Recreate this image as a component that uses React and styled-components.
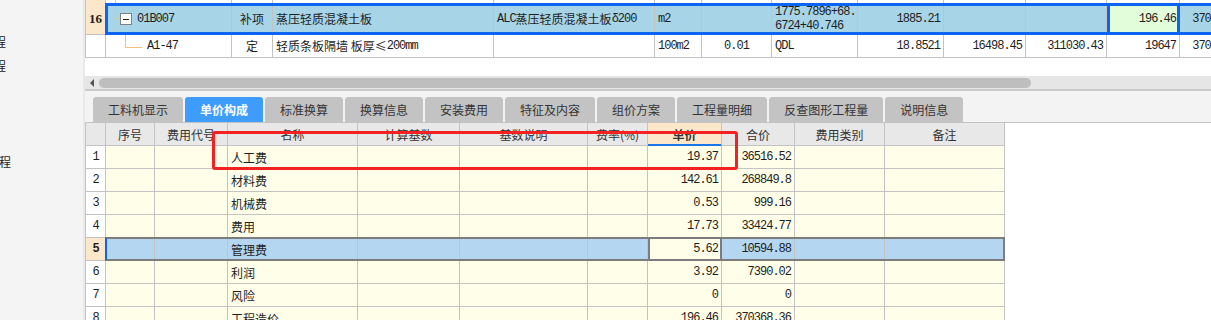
import React from "react";
import styled, { createGlobalStyle } from "styled-components";

const CJK = `"Noto Sans CJK SC", "Noto Sans", sans-serif`
const MONO = `"Liberation Mono", "Noto Sans CJK SC", monospace`

const GlobalStyle = createGlobalStyle`
  html, body {
    margin: 0;
    padding: 0;
    background: #fff;
  }
  body {
    width: 1211px;
    height: 320px;
    overflow: hidden;
    font-family: ${CJK};
    font-size: 12px;
    color: #1e1e1e;
  }
`

const TOP_COLS = [21, 126, 41, 221, 161, 47, 70, 86, 86, 82, 81, 73, 72]
const BOTTOM_COLS = [21, 49, 73, 130, 102, 128, 60, 74, 73, 90, 120]
const LINE = '#c3c3c3'
const PEACH = '#fde7ca'
const BLUE = '#0b64f2'

const Page = styled.div`
  position: relative;
  display: flex;
  width: 1211px;
  height: 320px;
  overflow: hidden;
  background: #fff;
`

const Sidebar = styled.div`
  flex: 0 0 83px;
  background: #f4f4f4;
  border-right: 2px solid #e9e9e9;
  padding-top: 30px;
  overflow: hidden;
  font-family: ${CJK};
  font-size: 12px;
  color: #222;
`

const TreeItem = styled.div`
  height: 24px;
  line-height: 24px;
  white-space: nowrap;
  margin-left: ${({ $shift }) => $shift}px;
`

const Main = styled.div`
  flex: 1;
  min-width: 0;
  display: flex;
  flex-direction: column;
  overflow: hidden;
`

const TopGrid = styled.div`
  flex: 0 0 76px;
  background: #fff;
  overflow: hidden;
`

const TopRow = styled.div`
  position: relative;
  display: flex;
  width: max-content;
  height: ${({ $h }) => $h}px;
  background: ${({ $bg }) => $bg || 'transparent'};
`

const justify = a => a === 'right' ? 'flex-end' : a === 'center' ? 'center' : 'flex-start'

const TopCell = styled.div`
  position: relative;
  flex: 0 0 ${({ $w }) => $w}px;
  box-sizing: border-box;
  display: flex;
  align-items: center;
  justify-content: ${({ $align }) => justify($align)};
  padding: 0 3px 0 ${({ $indent }) => $indent ?? 3}px;
  border-right: 1px solid ${LINE};
  border-bottom: ${({ $noBottom }) => $noBottom ? 'none' : `1px solid ${LINE}`};
  border-left: ${({ $first }) => $first ? `1px solid ${LINE}` : 'none'};
  background: ${({ $bg }) => $bg || 'transparent'};
  white-space: pre;
  overflow: hidden;
  line-height: 14px;
  font-family: ${({ $mono }) => $mono ? MONO : CJK};
  letter-spacing: ${({ $mono }) => $mono ? '-1px' : '0'};
  ${({ $focus }) => $focus && `
    border-right-color: ${BLUE};
    box-shadow: inset 3px 0 ${BLUE}, inset -2px 0 ${BLUE};
  `}
`

const RowNo = styled.span`
  font-family: "Liberation Serif", serif;
  font-weight: 700;
  font-size: 13px;
`

const Latin = styled.span`
  font-family: ${MONO};
  letter-spacing: -1px;
`

const TreeLines = styled.svg`
  position: absolute;
  left: 0;
  top: 0;
  pointer-events: none;
`

const SelectFrame = styled.div`
  position: absolute;
  left: 20px;
  top: 0;
  bottom: 0;
  right: -20px;
  border: 3px solid ${BLUE};
  pointer-events: none;
`

const HScroll = styled.div`
  flex: 0 0 15px;
  box-sizing: border-box;
  display: flex;
  align-items: center;
  padding-left: 5px;
  background: #e6e6e6;
  border-bottom: 2px solid #c9c9c9;
`

const ScrollArrow = styled.div`
  width: 0;
  height: 0;
  border-top: 4px solid transparent;
  border-bottom: 4px solid transparent;
  border-right: 4px solid #555;
  margin-right: 5px;
`

const ScrollThumb = styled.div`
  flex: 0 0 932px;
  height: 10px;
  border-radius: 5px;
  background: #bebebe;
`

const TabStrip = styled.div`
  flex: 0 0 31px;
  box-sizing: border-box;
  display: flex;
  align-items: flex-end;
  gap: 2px;
  padding-left: 8px;
  background: #f3f3f3;
`

const Tab = styled.div`
  height: 25px;
  padding: 0 15px;
  line-height: 25px;
  border-radius: 3px 3px 0 0;
  white-space: nowrap;
  font-family: ${CJK};
  font-size: 12px;
  background: ${({ $active }) => $active ? '#3f9cff' : '#c3c3c3'};
  color: ${({ $active }) => $active ? '#fff' : '#333'};
  font-weight: ${({ $active }) => $active ? 700 : 400};
`

const BottomPane = styled.div`
  flex: 1;
  background: #fff;
  border-top: 1px solid ${LINE};
`

const BGrid = styled.div`
  display: flex;
  flex-direction: column;
  width: max-content;
`

const BRow = styled.div`
  position: relative;
  display: flex;
`

const BCell = styled.div`
  flex: 0 0 ${({ $w }) => $w}px;
  height: 23px;
  box-sizing: border-box;
  display: flex;
  align-items: center;
  justify-content: ${({ $align }) => justify($align)};
  padding: 0 3px;
  border-right: 1px solid ${LINE};
  border-bottom: 1px solid ${LINE};
  border-left: ${({ $first }) => $first ? `1px solid ${LINE}` : 'none'};
  background: ${({ $bg }) => $bg};
  color: ${({ $head }) => $head ? '#333' : '#1e1e1e'};
  white-space: nowrap;
  overflow: hidden;
  font-family: ${({ $mono }) => $mono ? MONO : CJK};
  letter-spacing: ${({ $mono }) => $mono ? '-1px' : '0'};
  font-weight: ${({ $bold }) => $bold ? 700 : 400};
  ${({ $accent }) => $accent && `
    border-bottom-color: #1a74ea;
    box-shadow: inset 0 -1px #1a74ea;
  `}
  ${({ $focus }) => $focus && `
    border-right-color: #7c7c7c;
    box-shadow: inset 2px 0 #7c7c7c, inset -1px 0 #7c7c7c;
  `}
`

const RowFrame = styled.div`
  position: absolute;
  left: 20px;
  right: 0;
  top: -1px;
  bottom: 0;
  border: 2px solid #7c7c7c;
  border-left-color: ${BLUE};
  pointer-events: none;
`

const Annotation = styled.div`
  position: absolute;
  left: 212px;
  top: 131px;
  width: 526px;
  height: 39px;
  box-sizing: border-box;
  border: 3px solid #f22222;
  border-radius: 3px;
  pointer-events: none;
`

const TREE = '#f5bf73'

const ParentTree = () => (
  <TreeLines width="40" height="32">
    <path d="M9.5 0 V15.5 H14" stroke={TREE} fill="none" />
    <path d="M19.5 22 V32" stroke={TREE} fill="none" />
    <rect x="14.5" y="10.5" width="11" height="11" fill="#fff" stroke="#808080" />
    <path d="M17 16.5 H23" stroke="#222" />
  </TreeLines>
)

const ChildTree = () => (
  <TreeLines width="40" height="23">
    <path d="M19.5 0 V12.5 H36" stroke={TREE} fill="none" />
  </TreeLines>
)

const StripTree = () => (
  <TreeLines width="20" height="3">
    <path d="M9.5 0 V3" stroke={TREE} fill="none" />
  </TreeLines>
)

const parentRow = [
  { c: <RowNo>16</RowNo>, a: 'center', bg: PEACH },
  { c: '01B007', mono: true, indent: 31, tree: <ParentTree /> },
  { c: '补项', a: 'center' },
  { c: '蒸压轻质混凝土板' },
  { c: <><Latin>ALC</Latin>蒸压轻质混凝土板<Latin>δ200</Latin></> },
  { c: 'm2', mono: true },
  { c: '' },
  { c: '1775.7896+68.\n6724+40.746', mono: true },
  { c: '1885.21', a: 'right', mono: true },
  { c: '' },
  { c: '' },
  { c: '196.46', a: 'right', mono: true, bg: '#e2fdd9', focus: true },
  { c: '370368.36', a: 'right', mono: true },
]

const childRow = [
  { c: '', bg: '#fff' },
  { c: 'A1-47', mono: true, indent: 41, tree: <ChildTree /> },
  { c: '定', a: 'center' },
  { c: <>轻质条板隔墙 板厚≤<Latin>200mm</Latin></> },
  { c: '' },
  { c: '100m2', mono: true },
  { c: '0.01', a: 'center', mono: true },
  { c: 'QDL', mono: true },
  { c: '18.8521', a: 'right', mono: true },
  { c: '16498.45', a: 'right', mono: true },
  { c: '311030.43', a: 'right', mono: true },
  { c: '19647', a: 'right', mono: true },
  { c: '370368.36', a: 'right', mono: true },
]

const headers = ['', '序号', '费用代号', '名称', '计算基数', '基数说明', '费率(%)', '单价', '合价', '费用类别', '备注']

const costs = [
  ['人工费', '19.37', '36516.52'],
  ['材料费', '142.61', '268849.8'],
  ['机械费', '0.53', '999.16'],
  ['费用', '17.73', '33424.77'],
  ['管理费', '5.62', '10594.88'],
  ['利润', '3.92', '7390.02'],
  ['风险', '0', '0'],
  ['工程造价', '196.46', '370368.36'],
]

const tabs = ['工料机显示', '单价构成', '标准换算', '换算信息', '安装费用', '特征及内容', '组价方案', '工程量明细', '反查图形工程量', '说明信息']

const TopLine = ({ cells, h, bg, selected }) => (
  <TopRow $h={h} $bg={bg}>
    {cells.map((cell, i) => (
      <TopCell
        key={i}
        $w={TOP_COLS[i]}
        $first={i === 0}
        $align={cell.a}
        $mono={cell.mono}
        $indent={cell.indent}
        $bg={cell.bg}
        $focus={cell.focus}
      >
        {cell.tree}
        {cell.c}
      </TopCell>
    ))}
    {selected && <SelectFrame />}
  </TopRow>
)

// columns after the row number: 序号 费用代号 名称 计算基数 基数说明 费率 单价 合价 费用类别 备注
const PRICE = 6
const TOTAL = 7

const CostRow = ({ index, name, price, total }) => {
  const selected = index === 5
  const cream = selected ? '#b4d6f1' : '#fffee9'
  const values = ['', '', name, '', '', '', price, total, '', '']
  return (
    <BRow>
      <BCell $w={BOTTOM_COLS[0]} $first $align="center" $mono $bold={selected} $bg={selected ? PEACH : '#fff'}>
        {index}
      </BCell>
      {values.map((v, i) => {
        const num = i === PRICE || i === TOTAL
        return (
          <BCell
            key={i}
            $w={BOTTOM_COLS[i + 1]}
            $align={num ? 'right' : 'left'}
            $mono={num}
            $bg={selected && i === PRICE ? '#fffee9' : cream}
            $focus={selected && i === PRICE}
          >
            {v}
          </BCell>
        )
      })}
      {selected && <RowFrame />}
    </BRow>
  )
}

const App = () => (
  <>
    <GlobalStyle />
    <Page>
      <Sidebar>
        <TreeItem $shift={-18}>工程</TreeItem>
        <TreeItem $shift={-18}>工程</TreeItem>
        <TreeItem $shift={0} />
        <TreeItem $shift={0} />
        <TreeItem $shift={0} />
        <TreeItem $shift={-13}>工程</TreeItem>
      </Sidebar>
      <Main>
        <TopGrid>
          <TopRow $h={3}>
            {TOP_COLS.map((w, i) => (
              <TopCell key={i} $w={w} $first={i === 0} $noBottom $bg={i === 0 ? PEACH : undefined}>
                {i === 1 && <StripTree />}
              </TopCell>
            ))}
          </TopRow>
          <TopLine cells={parentRow} h={32} bg="#a7d5e7" selected />
          <TopLine cells={childRow} h={23} />
        </TopGrid>
        <HScroll>
          <ScrollArrow />
          <ScrollThumb />
        </HScroll>
        <TabStrip>
          {tabs.map(t => (
            <Tab key={t} $active={t === '单价构成'}>{t}</Tab>
          ))}
        </TabStrip>
        <BottomPane>
          <BGrid>
            <BRow>
              {headers.map((h, i) => (
                <BCell
                  key={i}
                  $w={BOTTOM_COLS[i]}
                  $first={i === 0}
                  $head
                  $align="center"
                  $bg={h === '单价' ? PEACH : '#e8e8e8'}
                  $bold={h === '单价'}
                  $accent={h === '单价'}
                >
                  {h}
                </BCell>
              ))}
            </BRow>
            {costs.map(([name, price, total], i) => (
              <CostRow key={name} index={i + 1} name={name} price={price} total={total} />
            ))}
          </BGrid>
        </BottomPane>
      </Main>
      <Annotation />
    </Page>
  </>
)

export default App
